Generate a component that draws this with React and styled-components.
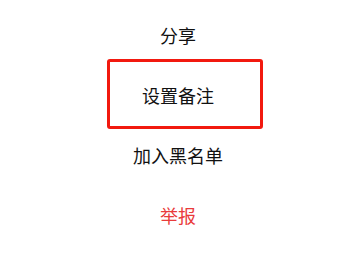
import React from 'react'
import styled, { createGlobalStyle } from 'styled-components'

const Global = createGlobalStyle`
  body {
    margin: 0;
    background: #fff;
    font-family: "Noto Sans CJK SC", "Noto Sans", sans-serif;
  }
`

const Menu = styled.ul`
  list-style: none;
  margin: 0;
  padding: 5px 7px 0 0;
  width: 363px;
  box-sizing: border-box;
  display: flex;
  flex-direction: column;
`

const Item = styled.li`
  position: relative;
  height: 60px;
  display: flex;
  align-items: center;
  justify-content: center;
  font-size: 18px;
  font-weight: 400;
  color: ${p => (p.$danger ? '#e93b3b' : '#111')};
`

// red highlight drawn over the selected row
const Highlight = styled.span`
  position: absolute;
  left: 107px;
  top: -6px;
  width: 156px;
  height: 70px;
  box-sizing: border-box;
  border: 3px solid #f2190f;
  border-radius: 3px;
  pointer-events: none;
`

const items = [
  { label: '分享' },
  { label: '设置备注', marked: true },
  { label: '加入黑名单' },
  { label: '举报', danger: true },
]

export default function App() {
  return (
    <>
      <Global />
      <Menu>
        {items.map(it => (
          <Item key={it.label} $danger={it.danger}>
            {it.label}
            {it.marked && <Highlight />}
          </Item>
        ))}
      </Menu>
    </>
  )
}
